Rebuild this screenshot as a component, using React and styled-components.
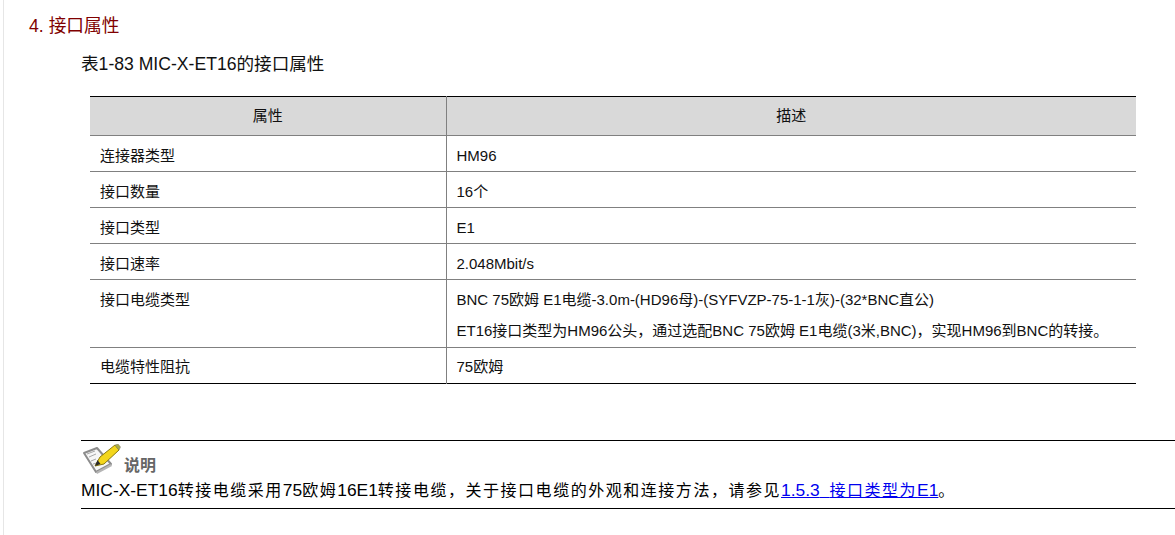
import React from "react";
import styled, { createGlobalStyle } from "styled-components";

const Global = createGlobalStyle`
  html, body { margin: 0; padding: 0; background: #fff; overflow: hidden; }
  body { font-family: "Liberation Sans", "Noto Sans CJK SC", sans-serif; color: #000; }
`;
const Page = styled.div`
  width: 1175px; height: 535px; box-sizing: border-box; overflow: hidden;
  margin-left: 3px; border-left: 1px solid #e6e6e6; padding-left: 77px;
`;
const Heading = styled.h4`
  margin: 15px 0 0 -52px; font-size: 17.7px; font-weight: 400; line-height: 22px; color: #800000;
`;
const Caption = styled.div`
  margin-top: 16px; font-size: 17.6px; line-height: 22px; color: #111;
`;
const Table = styled.table`
  margin: 21px 0 0 9px; width: 1046px; border-collapse: collapse; table-layout: fixed;
  font-size: 15px; color: #111;
  border-top: 1px solid #000; border-bottom: 1px solid #000;
`;
const Head = styled.th`
  width: ${p => p.$w || "auto"}; height: 39px; padding: 0 0 4px; box-sizing: border-box; background: #d9d9d9; font-weight: 400; text-align: center;
  border-bottom: 1px solid #808080; border-left: ${p => p.$line ? "1px solid #808080" : "0"};
`;
const Cell = styled.td`
  height: 36px; box-sizing: border-box; padding: ${p => p.$top ?? 4}px 9px 0 10px; vertical-align: top; line-height: 31px;
  border-top: 1px solid #808080; border-left: ${p => p.$line ? "1px solid #808080" : "0"};
`;
const Para = styled.div`
  line-height: 31px;
  margin-bottom: ${p => p.$after || 0}px;
`;
const Note = styled.div`
  margin-top: 56px; width: 1100px; border-top: 1px solid #000; border-bottom: 1px solid #000;
  height: 69px; box-sizing: border-box;
`;
const NoteHead = styled.div`
  display: flex; align-items: flex-end; height: 34px; font-size: 16px; font-weight: 700; color: #666; line-height: 18px;
`;
const NoteIcon = styled.svg`
  width: 40px; height: 30px; flex: none; align-self: flex-start; margin: 3px 2px 0 1px;
`;
const NoteBody = styled.div`
  font-size: 17.4px; line-height: 28px; white-space: nowrap;
`;
const Cjk = styled.span`
  font-size: 16px; letter-spacing: 1.53px; font-family: "Noto Sans CJK SC", sans-serif;
`;
const Link = styled.a`
  color: #0000ee; text-decoration: underline;
`;

const rows = [
  ["连接器类型", "HM96"],
  ["接口数量", "16个"],
  ["接口类型", "E1"],
  ["接口速率", "2.048Mbit/s"],
];

export default function App() {
  return (
    <Page>
      <Global />
      <Heading>4. 接口属性</Heading>
      <Caption>表1-83 MIC-X-ET16的接口属性</Caption>
      <Table>
        <thead>
          <tr><Head $w="356px">属性</Head><Head $line>描述</Head></tr>
        </thead>
        <tbody>
          {rows.map(([a, b]) => (
            <tr key={a}><Cell>{a}</Cell><Cell $line>{b}</Cell></tr>
          ))}
          <tr>
            <Cell>接口电缆类型</Cell>
            <Cell $line>
              <Para>BNC 75欧姆 E1电缆-3.0m-(HD96母)-(SYFVZP-75-1-1灰)-(32*BNC直公)</Para>
              <Para $after={1}>ET16接口类型为HM96公头，通过选配BNC 75欧姆 E1电缆(3米,BNC)，实现HM96到BNC的转接。</Para>
            </Cell>
          </tr>
          <tr><Cell $top={3}>电缆特性阻抗</Cell><Cell $top={3} $line>75欧姆</Cell></tr>
        </tbody>
      </Table>
      <Note>
        <NoteHead>
          <NoteIcon viewBox="0 0 40 30">
            <path d="M2 9 L15 4 L29 20 L14 28 Z" fill="#f6f6f6" stroke="#8c8c8c" strokeWidth="2" strokeLinejoin="round" />
            <path d="M5 10 L13 7 M7 13 L14 10 M9 17 L14 15 M11 20 L15 19" stroke="#a8a8a8" strokeWidth="1" />
            <path d="M14 28 L29 20 L30 22 L15 30 Z" fill="#b5b5b5" />
            <path d="M18 13 L33 1 L37 6 L22 20 L13 22 Z" fill="#f3d61c" stroke="#8a7a12" strokeWidth="1" strokeLinejoin="round" />
            <path d="M13 22 L15.5 16 L18.5 20 Z" fill="#2a2a2a" />
            <path d="M33 1 L36 0 L38.5 3 L37 6 Z" fill="#a9ad46" stroke="#777" strokeWidth="0.5" />
          </NoteIcon>
          说明
        </NoteHead>
        <NoteBody>
          MIC-X-ET16<Cjk>转接电缆采用</Cjk>75<Cjk>欧姆</Cjk>16E1<Cjk>转接电缆，关于接口电缆的外观和连接方法，请参见</Cjk>
          <Link href="#">1.5.3{"\u00a0\u00a0"}<Cjk>接口类型为</Cjk>E1</Link><Cjk>。</Cjk>
        </NoteBody>
      </Note>
    </Page>
  );
}
